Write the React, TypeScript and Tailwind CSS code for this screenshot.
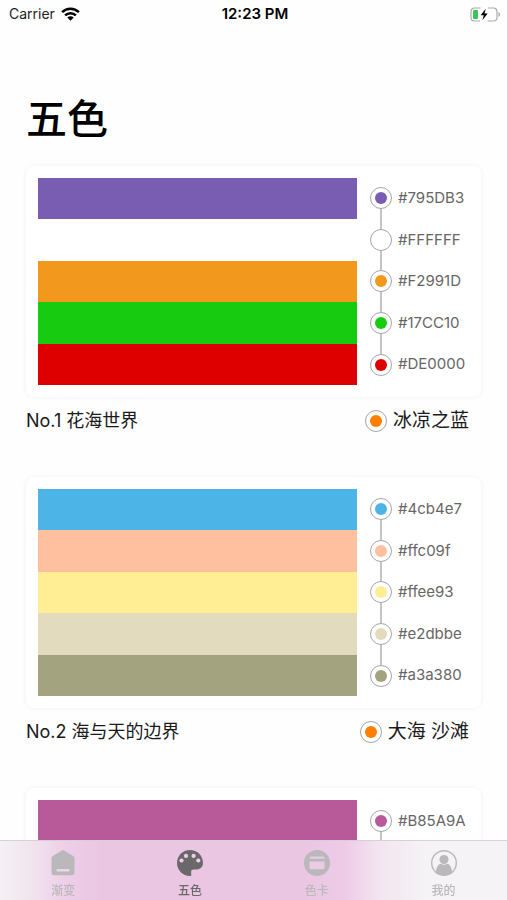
import React from "react";

interface Palette {
  id: number;
  name?: string;
  mood?: string;
  colors: string[];
}

const palettes: Palette[] = [
  {
    id: 1,
    name: "No.1 花海世界",
    mood: "冰凉之蓝",
    colors: ["#795DB3", "#FFFFFF", "#F2991D", "#17CC10", "#DE0000"],
  },
  {
    id: 2,
    name: "No.2 海与天的边界",
    mood: "大海 沙滩",
    colors: ["#4cb4e7", "#ffc09f", "#ffee93", "#e2dbbe", "#a3a380"],
  },
  {
    id: 3,
    colors: ["#B85A9A"],
  },
];

const Dot: React.FC<{ color: string }> = ({ color }) => {
  return (
    <span className="flex size-[22px] shrink-0 items-center justify-center rounded-full border border-[#a6a6a6] bg-white">
      <span
        className="size-3 rounded-full"
        style={{ backgroundColor: color }}
      ></span>
    </span>
  );
};

const StatusBar: React.FC = () => {
  return (
    <header className="grid h-7 shrink-0 grid-cols-3 items-center pl-[9px] pr-[6px] text-sm text-[#222]">
      <div className="flex items-center gap-[6px]">
        <span>Carrier</span>
        <svg width="19" height="14" viewBox="0 0 19 14" aria-hidden="true">
          <g fill="none" stroke="#000" strokeWidth="2.5">
            <path d="M1.1 5.1a12 12 0 0 1 16.8 0" />
            <path d="M4.1 8.4a7.7 7.7 0 0 1 10.8 0" />
          </g>
          <path d="M9.5 13.8 6.3 10.6a4.5 4.5 0 0 1 6.4 0z" fill="#000" />
        </svg>
      </div>
      <div className="text-center text-[15px] font-semibold text-black">
        12:23 PM
      </div>
      <svg
        className="justify-self-end"
        width="31"
        height="15"
        viewBox="0 0 31 15"
        aria-hidden="true"
      >
        <path
          d="M10.5 1H4.5A3.5 3.5 0 0 0 1 4.5v6A3.5 3.5 0 0 0 4.5 14H10M18 1h5.5A3.5 3.5 0 0 1 27 4.5v6a3.5 3.5 0 0 1-3.5 3.5H17.5"
          fill="none"
          stroke="#aaa"
          strokeWidth="1.2"
        />
        <path d="M28.5 5v5c2-.8 2-4.2 0-5z" fill="#aaa" />
        <rect x="3" y="3" width="5" height="9" rx="1.2" fill="#35c759" />
        <path
          d="M15.8 1.8 10.6 8.3h3.2l-1.4 4.9 5.3-6.6h-3.2z"
          fill="#000"
        />
      </svg>
    </header>
  );
};

const PaletteCard: React.FC<{ palette: Palette }> = ({ palette }) => {
  return (
    <article>
      <div className="flex gap-[13px] rounded-lg bg-white p-3 shadow-[0_0_5px_rgba(0,0,0,0.06)]">
        <div className="flex h-[207px] flex-1 flex-col">
          {palette.colors.map((color) => (
            <div
              key={color}
              className="flex-1"
              style={{ backgroundColor: color }}
            ></div>
          ))}
        </div>
        <ul className="relative flex w-[99px] flex-col">
          <li className="absolute top-5 bottom-5 left-[10px] w-[2px] bg-[#c4c4c4]"></li>
          {palette.colors.map((color) => (
            <li
              key={color}
              className="relative flex max-h-[41px] flex-1 items-center gap-[6px] text-[15px] text-[#666] not-last:mb-px last:max-h-[42px]"
            >
              <Dot color={color} />
              {color}
            </li>
          ))}
        </ul>
      </div>
      {palette.name && (
        <div className="mt-3 flex h-6 items-center justify-between pr-3 text-[#1a1a1a]">
          <h2 className="text-lg">{palette.name}</h2>
          <div className="flex items-center gap-[6px] text-[19px]">
            <Dot color="#ff8000" />
            <span>{palette.mood}</span>
          </div>
        </div>
      )}
    </article>
  );
};

const HomeIcon = () => (
  <svg width="26" height="28" viewBox="0 0 26 28" aria-hidden="true">
    <path
      d="M11.8 1.6a2.400 2.400 0 0 1 2.400 0l9.300 5.600a2 2 0 0 1 1 1.700v14.900a2.500 2.500 0 0 1-2.500 2.500H4a2.500 2.500 0 0 1-2.500-2.500V8.900a2 2 0 0 1 1-1.700z"
      fill="currentColor"
    />
    <rect x="6.500" y="20" width="13" height="2.400" rx="1" fill="#efd5ea" />
  </svg>
);

const PaletteIcon = () => (
  <svg width="28" height="28" viewBox="0 0 28 28" aria-hidden="true">
    <path
      d="M14 1C6.500 1 1 6.800 1 14c0 7.300 5.800 13 13 13h1.200v-4.500c0-1.200.8-1.900 2-1.900h3.100c3.800 0 6.700-2.800 6.700-6.600C27 6.300 21 1 14 1z"
      fill="currentColor"
    />
    <g fill="#efcde8">
      <circle cx="5.500" cy="11.500" r="2.100" />
      <circle cx="10" cy="6.900" r="2.100" />
      <circle cx="17.600" cy="6.900" r="2.100" />
      <circle cx="22.300" cy="11.500" r="2.100" />
    </g>
  </svg>
);

const CardIcon = () => (
  <svg width="28" height="28" viewBox="0 0 28 28" aria-hidden="true">
    <circle cx="14" cy="14" r="13" fill="currentColor" />
    <path d="M6.500 9.800V9A1.500 1.500 0 0 1 8 7.500h12A1.500 1.500 0 0 1 21.500 9v.8z" fill="#eacbe4" />
    <path d="M6.500 12.500h15v6.300a1.500 1.500 0 0 1-1.500 1.500H8a1.500 1.500 0 0 1-1.500-1.500z" fill="#eacbe4" />
  </svg>
);

const UserIcon = () => (
  <svg width="28" height="28" viewBox="0 0 28 28" aria-hidden="true">
    <circle
      cx="14"
      cy="14"
      r="12.3"
      fill="none"
      stroke="currentColor"
      strokeWidth="1.4"
    />
    <circle cx="14" cy="10.5" r="4.5" fill="currentColor" />
    <path
      d="M6 23.5c0-5 2-8.200 5-8.700 1.800 1.200 4.200 1.200 6 0 3 .5 5 3.700 5 8.700-4.500 4-11.500 4-16 0z"
      fill="currentColor"
    />
  </svg>
);

const tabs = [
  { label: "渐变", icon: <HomeIcon /> },
  { label: "五色", icon: <PaletteIcon />, active: true },
  { label: "色卡", icon: <CardIcon /> },
  { label: "我的", icon: <UserIcon /> },
];

const TabBar: React.FC = () => {
  return (
    <nav className="fixed inset-x-0 bottom-0 grid h-[60px] grid-cols-4 border-t border-[#d8d0d7] bg-[linear-gradient(to_right,#f4f1f4_0%,#f1e5ee_6%,#edcee8_13%,#eac6e3_20%,#eac6e3_60%,#edcbe7_68%,#f3e6f0_75%,#f5f3f5_84%)]">
      {tabs.map((tab) => (
        <button
          key={tab.label}
          type="button"
          className={`flex flex-col items-center gap-1 pt-2 text-xs leading-5 font-medium ${
            tab.active ? "text-[#6b686b]" : "text-[#bab8ba]"
          }`}
        >
          {tab.icon}
          {tab.label}
        </button>
      ))}
    </nav>
  );
};

const App: React.FC = () => {
  return (
    <div className="flex h-screen flex-col overflow-hidden bg-[#fefefe] font-['Inter','Noto_Sans_CJK_SC',sans-serif]">
      <StatusBar />
      <main className="flex-1 overflow-hidden px-[26px] pt-16">
        <h1 className="text-[41px] leading-[54px] font-medium text-black">
          五色
        </h1>
        <div className="mt-5 flex flex-col gap-11">
          {palettes.map((palette) => (
            <PaletteCard key={palette.id} palette={palette} />
          ))}
        </div>
      </main>
      <TabBar />
    </div>
  );
};

export default App;
